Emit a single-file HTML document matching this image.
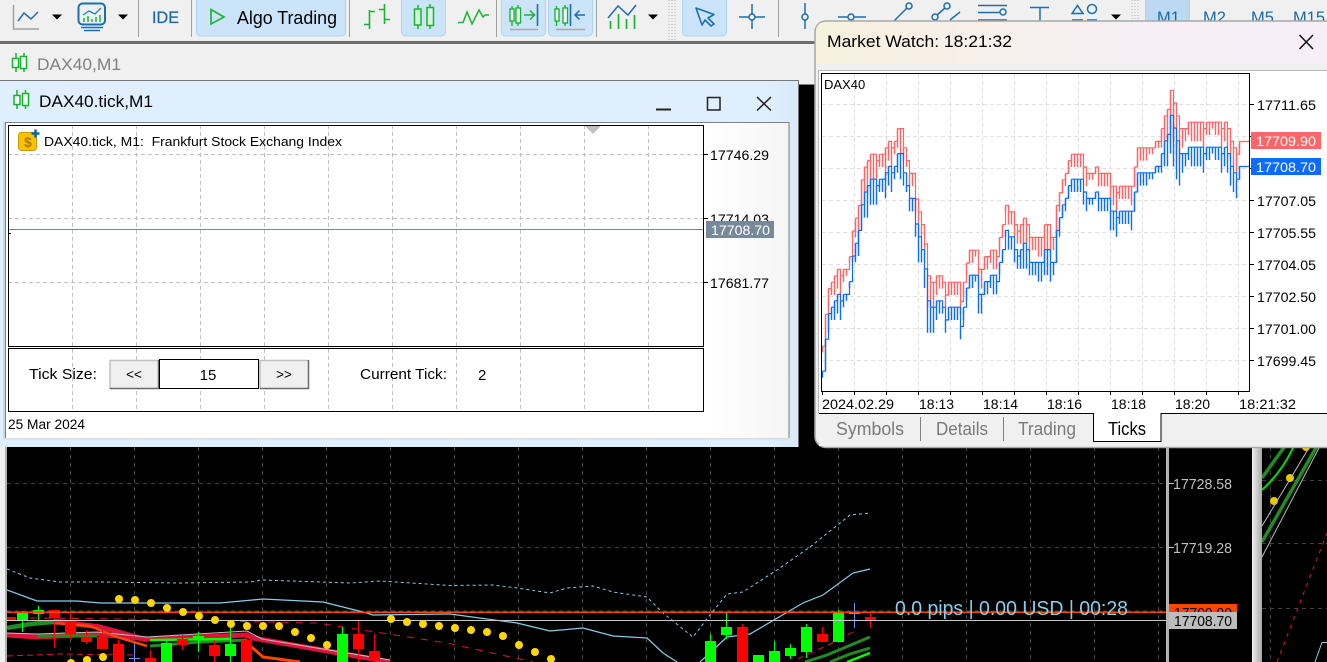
<!DOCTYPE html>
<html><head><meta charset="utf-8"><style>
html,body{margin:0;padding:0;background:#000;width:1327px;height:662px;overflow:hidden}
svg{display:block;position:absolute;left:0;top:0}
text{font-family:"Liberation Sans",sans-serif;white-space:pre}
</style></head><body>
<svg id="s" xmlns="http://www.w3.org/2000/svg" width="1327" height="662" viewBox="0 0 1327 662">
<defs>
<linearGradient id="mw" x1="0" x2="1" y1="0" y2="0"><stop offset="0" stop-color="#f7f1de"/><stop offset=".55" stop-color="#f8eff3"/><stop offset="1" stop-color="#f7eef9"/></linearGradient>
<linearGradient id="tb" x1="0" x2="1" y1="0" y2="0"><stop offset="0" stop-color="#dfeffd"/><stop offset=".96" stop-color="#dfeffd"/><stop offset="1" stop-color="#d9e9f7"/></linearGradient>
<linearGradient id="ib" x1="0" x2="1" y1="0" y2="0"><stop offset="0" stop-color="#fff"/><stop offset=".9" stop-color="#fff"/><stop offset="1" stop-color="#f5f5f5"/></linearGradient>
<linearGradient id="dv" x1="0" x2="1" y1="0" y2="0"><stop offset="0" stop-color="#f0f0f0"/><stop offset="1" stop-color="#a8a8a8"/></linearGradient>
<clipPath id="main"><rect x="7" y="447" width="1159" height="215"/></clipPath>
<clipPath id="rp"><rect x="1262" y="447" width="65" height="215"/></clipPath>
</defs>

<!-- base black -->
<rect width="1327" height="662" fill="#000"/>

<!-- main chart -->
<g id="main-chart" clip-path="url(#main)"></g>
<rect x="0" y="447" width="5" height="215" fill="#f0f0f0"/>
<rect x="5" y="447" width="2" height="215" fill="#b0b0b0"/>
<rect x="1166" y="447" width="3" height="215" fill="#b4b4b4"/>
<path d="M1169 483.500h5M1169 547.500h5" stroke="#c0c0c0"/>
<text x="1173" y="489" font-size="14.500" fill="#c0c0c0" textLength="59" lengthAdjust="spacingAndGlyphs">17728.58</text>
<text x="1173" y="553" font-size="14.500" fill="#c0c0c0" textLength="59" lengthAdjust="spacingAndGlyphs">17719.28</text>
<rect x="1169" y="604" width="68" height="9" fill="#ff4500"/>
<text x="1174" y="618" font-size="14.500" fill="#000" textLength="58" lengthAdjust="spacingAndGlyphs">17709.90</text>
<rect x="1169" y="612" width="68" height="17" fill="#bdbdbd"/>
<text x="1174" y="626" font-size="14.500" fill="#000" textLength="58" lengthAdjust="spacingAndGlyphs">17708.70</text>
<text x="895" y="615" font-size="20" fill="#87ceeb" textLength="233" lengthAdjust="spacingAndGlyphs">0.0 pips | 0.00 USD | 00:28</text>

<!-- right panel -->
<rect x="1252" y="447" width="10" height="215" fill="url(#dv)"/>
<g clip-path="url(#rp)">
<path d="M1262 480.500H1327M1262 543.500H1327M1262 608.500H1327M1270.500 447V662" stroke="#404040" stroke-dasharray="4 4" fill="none"/>
<path d="M1262 526L1310 446M1262 557L1320 446" stroke="#b8b8b8" fill="none"/>
<path d="M1262 478L1285 446M1262 542L1317 446" stroke="#228b22" stroke-width="3.500" fill="none"/>
<path d="M1262 490Q1282 472 1294 446" stroke="#00e000" stroke-width="2" fill="none"/>
<circle cx="1274" cy="501" r="4" fill="#e6c700"/><circle cx="1290" cy="478" r="4" fill="#e6c700"/><circle cx="1306" cy="447" r="4" fill="#e6c700"/>
<path d="M1277 662L1327 533" stroke="#dc143c" stroke-dasharray="4 5" fill="none"/>
<path d="M1315 662L1322 642.500H1327" stroke="#87ceeb" fill="none"/>
</g>

<!-- toolbar + tab strip -->
<rect x="0" y="0" width="1327" height="41" fill="#f0f0f0"/>
<rect x="0" y="41" width="1327" height="3" fill="#6e6e6e"/>
<rect x="0" y="44" width="815" height="41" fill="#f0f0f0"/>
<rect x="798" y="84" width="18" height="1" fill="#808080"/>
<!-- candle icon tab -->
<g fill="#fff" stroke="#14b32c" stroke-width="1.500">
<path d="M16 53v19M24 53v19" fill="none"/><rect x="12.500" y="58.500" width="6" height="9"/><rect x="20.500" y="56.500" width="6" height="12"/></g>
<text x="37" y="70" font-size="17" fill="#808080" textLength="84" lengthAdjust="spacingAndGlyphs">DAX40,M1</text>

<!-- toolbar icons -->
<path d="M13.500 5V29H39" stroke="#a0a0a0" stroke-width="1.500" fill="none"/>
<path d="M18 21L24 13L31 19L38 12" stroke="#1f6fb2" stroke-width="1.500" fill="none"/>
<path d="M52 14.500H62L57 19.500ZM118 14.500H128L123 19.500ZM648 14.500H658L653 19.500ZM1111 14.500H1121L1116 19.500Z" fill="#000"/>
<rect x="78.500" y="3.500" width="26.500" height="21" rx="4" fill="none" stroke="#1a6fb0" stroke-width="2"/>
<path d="M81 27.500H103M84 30.500H100" stroke="#1a6fb0" stroke-width="1.500"/>
<path d="M83 15L89 11L95 14L101 8" stroke="#1f7fc0" fill="none" stroke-width="1.300"/>
<path d="M84 22v-4M88 22v-6M92 22v-3M96 22v-5M100 22v-7" stroke="#20b040" stroke-width="1.500"/>
<path d="M138.500 0V37M191.500 0V37M349.500 0V37M496.500 0V37M596.500 0V37M778.500 0V37" stroke="#a0a0a0"/>
<text x="152" y="23" font-size="17" fill="#1b6aa8" stroke="#1b6aa8" stroke-width=".3" textLength="27" lengthAdjust="spacingAndGlyphs">IDE</text>
<rect x="196.500" y="-3" width="149" height="39" rx="4" fill="#cce4fa" stroke="#a8d4fb"/>
<path d="M211 9.500L224 17L211 24Z" fill="none" stroke="#1db33a" stroke-width="1.700"/>
<text x="237" y="24" font-size="18" fill="#000" textLength="100" lengthAdjust="spacingAndGlyphs">Algo Trading</text>
<path d="M369.500 10V29M364 24.500H369M369 11.500H375M384.500 4V24M379 9.500H384M384 19.500H390" stroke="#17b52f" stroke-width="1.600" fill="none"/>
<rect x="401.500" y="-3" width="44" height="39" rx="4" fill="#cce4fa" stroke="#a8d4fb"/>
<g fill="#d4f7dc" stroke="#17b52f" stroke-width="1.500"><path d="M418 5v24M430 4v25" fill="none"/><rect x="414.500" y="9" width="6.500" height="16"/><rect x="427" y="7.500" width="6.500" height="18"/></g>
<path d="M458 22.500H463L467 12L472 24L479 10L483 17L485 15H489" stroke="#17b52f" stroke-width="1.500" fill="none"/>
<rect x="501.500" y="-3" width="44" height="39" rx="4" fill="#cce4fa" stroke="#a8d4fb"/>
<rect x="548.500" y="-3" width="44" height="39" rx="4" fill="#cce4fa" stroke="#a8d4fb"/>
<g stroke="#17b52f" stroke-width="1.400" fill="#fff"><path d="M512 6v20M518 5v21M556.500 6v20M565 5v21" fill="none"/><rect x="510" y="9" width="4" height="12"/><rect x="516" y="8" width="4.500" height="15"/><rect x="557" y="9" width="4" height="12" transform="translate(-2)"/><rect x="563" y="8" width="4.500" height="15"/></g>
<path d="M524 15H534M530 10.500L534.500 15L530 19.500" stroke="#17b52f" stroke-width="1.500" fill="none"/>
<path d="M537.500 4V26M570.500 4V26" stroke="#1a6fb0" stroke-width="1.600"/>
<path d="M585 15H575M579.500 10.500L575 15L579.500 19.500" stroke="#1a6fb0" stroke-width="1.500" fill="none"/>
<path d="M510 29.500H538M556 29.500H585" stroke="#a8a8a8" stroke-width="1.500"/>
<path d="M608 18L618 6L628 15L636 5" stroke="#1f6fb2" stroke-width="1.500" fill="none"/>
<path d="M610.500 29V21M618.500 29V14M626.500 29V19M634.500 29V15" stroke="#17b52f" stroke-width="1.700"/>
<path d="M669 0V40M672 0V40M675 0V40M1132 0V40M1135 0V40M1138 0V40" stroke="#b8b8b8" stroke-dasharray="1 2"/>
<rect x="682.500" y="-3" width="44" height="39" rx="4" fill="#cce4fa" stroke="#a8d4fb"/>
<path d="M696 8L714 14.500L708 18L714 24L711 26L705 20L702 25Z" fill="none" stroke="#1a6fb0" stroke-width="1.600" stroke-linejoin="round"/>
<g stroke="#1a6fb0" stroke-width="1.500" fill="none">
<path d="M739 17H748.500M755.500 17H765M752 4V13.500M752 20.500V29"/><circle cx="752" cy="17" r="3"/>
<path d="M805 3V13.500M805 20.500V29"/><circle cx="805" cy="17" r="3"/>
<path d="M838 17H848M854.500 17H866"/><circle cx="851" cy="17" r="3"/>
<path d="M893 22L907 8"/><circle cx="909" cy="6" r="3"/>
<path d="M937 15L945 8M950 20L960 12"/><circle cx="935" cy="17" r="3"/><circle cx="947" cy="6" r="3"/>
<path d="M978 5.500H1007M978 12.500H1000M978 20H1007"/><circle cx="1003" cy="12" r="3"/>
<path d="M1030 7.500H1049M1040 7.500V24"/>
<path d="M1077.500 5.500L1083 13.500H1072Z"/><circle cx="1092" cy="9" r="4.500"/>
<path d="M1072 20H1083M1087 20H1097"/>
</g>
<rect x="1145.500" y="-2" width="44" height="40" fill="#bcd9f2" stroke="#a8d4fb"/>
<g font-size="16.500" fill="#1b6aa8"><text x="1157" y="23">M1</text><text x="1203" y="23">M2</text><text x="1251" y="23">M5</text><text x="1293" y="23">M15</text></g>

<!-- tick dialog -->
<rect x="0" y="80" width="798" height="367" fill="url(#tb)"/>
<path d="M0 80.500H798.500V447" stroke="#777" fill="none"/>
<g fill="#fff" stroke="#14b32c" stroke-width="1.500">
<path d="M17 90v19M25.500 90v19" fill="none"/><rect x="14" y="95.500" width="6" height="9"/><rect x="22.500" y="93.500" width="6" height="12"/></g>
<text x="39" y="107" font-size="17" fill="#000" textLength="114" lengthAdjust="spacingAndGlyphs">DAX40.tick,M1</text>
<path d="M656 109.500H671" stroke="#222" stroke-width="2"/>
<rect x="707.500" y="97.500" width="12.500" height="12.500" fill="none" stroke="#222" stroke-width="1.500"/>
<path d="M757 97L771 110.500M771 97L757 110.500" stroke="#222" stroke-width="1.500"/>
<rect x="5" y="122" width="784" height="316" fill="url(#ib)"/>
<path d="M5.500 438V122.500H789V438" stroke="#808080" fill="none"/>
<rect x="5" y="438" width="784" height="1.500" fill="#dcdcdc"/>
<rect x="3" y="122" width="2" height="317" fill="#c8d8e4"/>
<!-- dialog grid -->
<path d="M72.500 125V411M136.500 125V411M200.500 125V411M264.500 125V411M328.500 125V411M392.500 125V411M456.500 125V411M520.500 125V411M584.500 125V411M648.500 125V411M8 154.500H704M8 218.500H704M8 282.500H704" stroke="#c0c0c0" stroke-dasharray="4 3" fill="none"/>
<path d="M8 229.500H704" stroke="#778899"/>
<rect x="8.500" y="125.500" width="695" height="221" fill="none" stroke="#000"/>
<rect x="8.500" y="348.500" width="695" height="63" fill="none" stroke="#000"/>
<path d="M8 233.500H11M704 154.500H708M704 218.500H708M704 282.500H708" stroke="#000"/>
<path d="M585 126H601L593 134Z" fill="#c0c0c0"/>
<rect x="18.500" y="132.500" width="18" height="18" rx="3" fill="#fcc200" stroke="#c99a00"/>
<text x="24" y="147" font-size="14" fill="#a87a00" font-weight="bold">$</text>
<path d="M35.500 129.500V137.500M31.500 133.500H39.500" stroke="#0a63b0" stroke-width="2.500"/>
<text x="44" y="146" font-size="13" fill="#000" textLength="298" lengthAdjust="spacingAndGlyphs">DAX40.tick, M1:  Frankfurt Stock Exchang Index</text>
<g font-size="14" fill="#000"><text x="710" y="160" textLength="59" lengthAdjust="spacingAndGlyphs">17746.29</text><text x="710" y="224" textLength="59" lengthAdjust="spacingAndGlyphs">17714.03</text><text x="710" y="288" textLength="59" lengthAdjust="spacingAndGlyphs">17681.77</text></g>
<rect x="706" y="221" width="68" height="17" fill="#778899"/>
<text x="711" y="235" font-size="14" fill="#fff" textLength="59" lengthAdjust="spacingAndGlyphs">17708.70</text>
<!-- controls -->
<text x="29" y="379" font-size="15" fill="#000" textLength="68" lengthAdjust="spacingAndGlyphs">Tick Size:</text>
<g>
<rect x="110" y="360" width="49" height="29" fill="#f0f0f0"/><path d="M110 389V360.500H159" stroke="#c0c0c0" stroke-width="1.500" fill="none"/><path d="M110 388.500H158.500V360" stroke="#696969" stroke-width="1.500" fill="none"/>
<rect x="260" y="360" width="49" height="29" fill="#f0f0f0"/><path d="M260 389V360.500H309" stroke="#c0c0c0" stroke-width="1.500" fill="none"/><path d="M260 388.500H308.500V360" stroke="#696969" stroke-width="1.500" fill="none"/>
<rect x="159.500" y="359.500" width="99" height="29" fill="#fff" stroke="#000"/>
</g>
<text x="134" y="379" font-size="13.500" fill="#000" text-anchor="middle">&lt;&lt;</text>
<text x="284" y="379" font-size="13.500" fill="#000" text-anchor="middle">&gt;&gt;</text>
<text x="208" y="380" font-size="15" fill="#000" text-anchor="middle">15</text>
<text x="360" y="379" font-size="15" fill="#000" textLength="87" lengthAdjust="spacingAndGlyphs">Current Tick:</text>
<text x="478" y="380" font-size="15" fill="#000">2</text>
<text x="8" y="429" font-size="13.500" fill="#000" textLength="77" lengthAdjust="spacingAndGlyphs">25 Mar 2024</text>

<!-- market watch -->
<rect x="815" y="21" width="530" height="426.500" rx="11" fill="#f0f0f0" stroke="#a8a8a8" stroke-width="1.500"/>
<path d="M816 64V32Q816 22 826 22H1327V64Z" fill="url(#mw)"/>
<text x="827" y="47" font-size="17" fill="#000" textLength="185" lengthAdjust="spacingAndGlyphs">Market Watch: 18:21:32</text>
<path d="M1299.500 35L1313 49M1313 35L1299.500 49" stroke="#111" stroke-width="1.500"/>
<rect x="819" y="70" width="508" height="343" fill="#fff"/>
<path d="M819 70.500H1327M818.500 70V413" stroke="#b8b8b8" fill="none"/>
<path d="M854.500 74V391M886.500 74V391M918.500 74V391M950.500 74V391M982.500 74V391M1014.500 74V391M1046.500 74V391M1078.500 74V391M1110.500 74V391M1142.500 74V391M1174.500 74V391M1206.500 74V391M1238.500 74V391M822 104.500H1250M822 136.500H1250M822 168.500H1250M822 200.500H1250M822 232.500H1250M822 264.500H1250M822 296.500H1250M822 328.500H1250M822 360.500H1250" stroke="#e0e0e0" stroke-dasharray="4 3" fill="none"/>
<g id="ticks"></g>
<text x="824" y="89" font-size="13" fill="#000">DAX40</text>
<rect x="821.500" y="73.500" width="428" height="318" fill="none" stroke="#000"/>
<path d="M1250 104.500H1254M1250 136.500H1254M1250 168.500H1254M1250 200.500H1254M1250 232.500H1254M1250 264.500H1254M1250 296.500H1254M1250 328.500H1254M1250 360.500H1254M822.500 391V395M854.500 391V395M886.500 391V395M918.500 391V395M950.500 391V395M982.500 391V395M1014.500 391V395M1046.500 391V395M1078.500 391V395M1110.500 391V395M1142.500 391V395M1174.500 391V395M1206.500 391V395M1238.500 391V395" stroke="#000"/>
<g font-size="14" fill="#000">
<text x="1257" y="110" textLength="59" lengthAdjust="spacingAndGlyphs">17711.65</text>
<text x="1257" y="206" textLength="59" lengthAdjust="spacingAndGlyphs">17707.05</text>
<text x="1257" y="238" textLength="59" lengthAdjust="spacingAndGlyphs">17705.55</text>
<text x="1257" y="270" textLength="59" lengthAdjust="spacingAndGlyphs">17704.05</text>
<text x="1257" y="302" textLength="59" lengthAdjust="spacingAndGlyphs">17702.50</text>
<text x="1257" y="334" textLength="59" lengthAdjust="spacingAndGlyphs">17701.00</text>
<text x="1257" y="366" textLength="59" lengthAdjust="spacingAndGlyphs">17699.45</text>
<text x="822" y="409" textLength="72" lengthAdjust="spacingAndGlyphs">2024.02.29</text>
<text x="919" y="409">18:13</text><text x="983" y="409">18:14</text><text x="1047" y="409">18:16</text><text x="1111" y="409">18:18</text><text x="1175" y="409">18:20</text><text x="1239" y="409" textLength="57" lengthAdjust="spacingAndGlyphs">18:21:32</text>
</g>
<rect x="1251" y="132" width="70" height="17" fill="#fd6666"/>
<text x="1256" y="146" font-size="14" fill="#fff" textLength="60" lengthAdjust="spacingAndGlyphs">17709.90</text>
<rect x="1251" y="158" width="70" height="17" fill="#0b6cff"/>
<text x="1256" y="172" font-size="14" fill="#fff" textLength="60" lengthAdjust="spacingAndGlyphs">17708.70</text>
<!-- tabs -->
<rect x="819" y="414" width="508" height="32" fill="#f0f0f0"/>
<path d="M819 413.500H1094M1161 413.500H1327" stroke="#000"/>
<rect x="1093.500" y="413" width="67.500" height="29" fill="#fff"/>
<path d="M1093.500 413V441.500H1161V413" stroke="#000" fill="none"/>
<g font-size="18">
<text x="836" y="435" fill="#7a7a7a" textLength="68" lengthAdjust="spacingAndGlyphs">Symbols</text>
<text x="936" y="435" fill="#7a7a7a" textLength="52" lengthAdjust="spacingAndGlyphs">Details</text>
<text x="1018" y="435" fill="#7a7a7a" textLength="58" lengthAdjust="spacingAndGlyphs">Trading</text>
<text x="1108" y="435" fill="#000" textLength="38" lengthAdjust="spacingAndGlyphs">Ticks</text>
</g>
<path d="M920.500 417V441M1003.500 417V441" stroke="#808080"/>
</svg>
<script>
(function(){
var NS="http://www.w3.org/2000/svg";
function el(p,n,a){var e=document.createElementNS(NS,n);for(var k in a)e.setAttribute(k,a[k]);p.appendChild(e);return e;}
/* tick chart */
var K=[[822,366,376],[825,330,365],[828,313,330],[831,310,325],[836,295,312],[845,295,312],[848,290,302],[851,262,270],[855,240,262],[860,210,235],[868,180,210],[875,180,205],[880,180,200],[885,170,195],[893,167,180],[899,150,175],[904,177,190],[912,200,220],[915,225,240],[918,235,262],[923,262,270],[926,290,325],[930,310,335],[936,300,325],[940,305,322],[945,315,325],[950,305,315],[958,305,320],[961,325,335],[964,300,312],[968,272,292],[975,275,290],[980,295,313],[985,280,292],[995,275,292],[1000,262,280],[1005,230,245],[1012,240,250],[1017,255,270],[1023,240,265],[1030,260,275],[1040,262,282],[1047,245,270],[1052,270,281],[1056,230,260],[1060,215,240],[1066,190,205],[1072,177,188],[1082,177,188],[1085,197,208],[1092,197,208],[1096,188,205],[1100,197,208],[1105,197,208],[1110,208,228],[1118,212,230],[1125,208,228],[1132,208,225],[1135,170,190],[1140,170,180],[1150,170,182],[1158,165,175],[1165,140,170],[1170,113,150],[1175,140,178],[1180,155,185],[1185,145,165],[1200,145,165],[1205,145,160],[1212,150,165],[1220,145,165],[1226,150,170],[1232,170,187],[1238,170,187],[1240,166,180]];
function at(x){for(var i=0;i<K.length-1;i++){if(x<=K[i+1][0]){var t=(x-K[i][0])/(K[i+1][0]-K[i][0]);return [K[i][1]+(K[i+1][1]-K[i][1])*t,K[i][2]+(K[i+1][2]-K[i][2])*t];}}return K[K.length-1].slice(1);}
var Q=6.4;
function comb(off,col,tail){var d="",top="",px=null,pa=0;
for(var x=822;x<=1240;x+=3){var v=at(x);
 var j=Math.sin(x*1.73)>0.82?Q:0;
 var a=Math.round(v[0]/Q)*Q+off+j,h=Math.max(Q,Math.round((v[1]-v[0])/Q)*Q);
 if(Math.sin(x*2.3)<-0.5)h=Math.max(Q,h-Q);
 a=Math.max(a,75);
 d+="M"+(x+.5)+" "+a.toFixed(1)+"V"+(a+h).toFixed(1);
 if(px!==null)top+="M"+(px+.5)+" "+pa.toFixed(1)+"H"+(x+.5)+"V"+a.toFixed(1);
 px=x;pa=a;}
el(g,"path",{d:d,stroke:col,"stroke-width":"1.4",fill:"none"});el(g,"path",{d:top,stroke:col,"stroke-width":"1.2",fill:"none"});el(g,"path",{d:"M"+(px+.5)+" "+pa.toFixed(1)+"V"+tail+"H1250",stroke:col,"stroke-width":"1.2",fill:"none"});}
var g=document.getElementById("ticks");comb(-25,"#ff6464",141.5);comb(0,"#0a6cff",166.5);
/* main chart */
var m=document.getElementById("main-chart"),d="";
for(var x=6;x<1166;x+=64)d+="M"+(x+.5)+" 447V662";d+="M7 483.500H1166M7 547.500H1166";
el(m,"path",{d:d,stroke:"#444","stroke-dasharray":"4 4",fill:"none"});
el(m,"path",{d:"M7 611H1166",stroke:"#444","stroke-dasharray":"4 4"});
function pl(p,s,w,da){var o={points:p,stroke:s,"stroke-width":w,fill:"none"};if(da)o["stroke-dasharray"]=da;el(m,"polyline",o);}
pl("7,569 30,578 60,582 100,582 180,583 250,582 262,580 350,583 380,581 450,585.500 493,585 517,588 550,593 567,588 593,586 613,592 647,597 663,613 693,637 710,615 727,594 743,592 777,570 810,547 850,515 870,513","#87ceeb",1,"3 3");
pl("7,590 37,601 77,601 100,603 147,603 220,603 263,599 323,602 367,613 373,615 447,614 450,614 517,623 550,631 583,628 613,636 647,638 663,653 677,662","#87ceeb",1.2);
pl("700,662 727,637 750,634 803,603 823,595 853,573 870,569","#87ceeb",1.2);
pl("7,656 60,654 133,655","#dc143c",1,"6 4");
pl("30,618 120,619 317,623 447,643 533,662","#dc143c",1,"7 7");
pl("798,659 830,644 855,631","#dc143c",1,"6 5");
/* ribbons */
pl("7,635 37,637 97,634 147,639 247,635 253,638 390,662","#dc143c",5);
pl("53,621 100,627 147,640","#dc143c",5);
pl("7,633 37,634 97,632 147,637 247,631 262,639 390,660","#c0c0c0",1);
pl("7,628 30,624 53,622","#228b22",4.500);
pl("37,636 97,636","#228b22",3);
pl("150,646 200,642 247,640","#228b22",3);
pl("150,640 230,639","#00ff00",2.500);
pl("53,623 90,626 117,637 147,646","#ff4500",2.500);
pl("247,643 263,657 300,662","#ff4500",3);
pl("805,662 827,655 870,637","#228b22",3);
pl("830,662 850,654 870,648","#228b22",3);
pl("847,662 870,653","#00ff00",2.500);
/* candles: x,wickTop,wickBot,bodyTop,bodyBot,color */
var G="#00ff00",R="#ff0000",B="#6495ed",C=[[10,617,621,617,621,R],[22,611,632,613,621,G],[38,606,620,610,614,G],[54,610,648,610,618,R],[70,613,640,620,634,R],[86,630,644,637,642,R],[102,630,649,637,649,R],[118,640,662,644,662,R],[150,650,662,658,662,R],[166,640,662,643,662,G],[182,635,650,639,645,R],[198,632,652,636,640,G],[214,640,662,645,656,R],[230,628,662,644,656,G],[246,632,662,640,662,R],[342,627,662,634,662,G],[358,620,662,634,649,R],[374,634,662,651,660,R],[710,634,662,641,662,G],[726,613,639,627,635,G],[742,624,662,627,662,R],[758,655,662,655,662,G],[774,641,662,651,662,G],[790,644,659,648,656,G],[806,624,658,627,652,G],[822,627,642,634,642,R],[838,610,642,613,642,G],[870,613,628,617,621,R]];
C.forEach(function(c){el(m,"rect",{x:c[0],y:c[1],width:1,height:c[2]-c[1],fill:c[5]});el(m,"rect",{x:c[0]-5,y:c[3],width:11,height:c[4]-c[3],fill:c[5]});});
el(m,"path",{d:"M134.500 643V662M129 658.500H140M854.500 603V628M849 613.500H860",stroke:B,"stroke-width":1,fill:"none"});
/* main lines */
el(m,"rect",{x:7,y:611.500,width:1159,height:1.500,fill:"#ff4500"});
el(m,"rect",{x:7,y:620,width:1159,height:1,fill:"#c8c8c8"});
/* dots */
[[119,599],[135,600],[151,603],[167,608],[183,612],[199,616],[215,620],[231,624],[247,626],[263,626],[279,626],[295,632],[311,638],[327,645],[391,619],[407,622],[423,624],[439,626],[455,628],[471,630],[487,632],[503,636],[519,645],[535,652],[551,659],[71,663],[87,660],[103,657]].forEach(function(p){el(m,"circle",{cx:p[0],cy:p[1],r:4,fill:"#ffd700"});});
})();
</script>
</body></html>
